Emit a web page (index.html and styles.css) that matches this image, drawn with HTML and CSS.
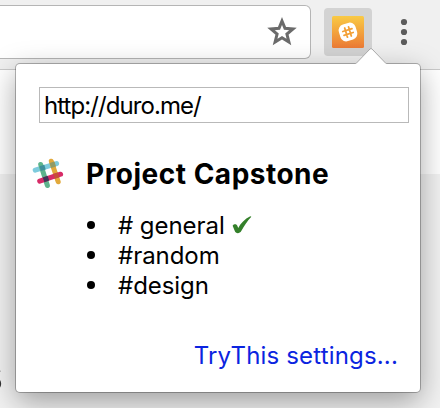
FILE: index.html
```
<!DOCTYPE html>
<html lang="en">
<head>
<meta charset="utf-8">
<title>TryThis</title>
<link rel="stylesheet" href="styles.css">
</head>
<body>
<header class="toolbar">
  <div class="address-bar">
    <svg class="star" width="32" height="32" viewBox="0 0 32 32"><path d="M16 5 19 12.3 27 12.9 20.9 18.1 22.9 26 16 21.7 9.1 26 11.1 18.1 5 12.9 13 12.3Z" fill="none" stroke="#6b6b6b" stroke-width="3"/></svg>
  </div>
  <div class="extension">
    <svg width="32" height="32" viewBox="0 0 32 32">
      <defs><linearGradient id="sun" x2="0" y2="1"><stop stop-color="#f9ca45"/><stop offset="1" stop-color="#ec7b35"/></linearGradient></defs>
      <rect width="32" height="32" rx="1.5" fill="url(#sun)"/>
      <g transform="rotate(-17 16 16)">
        <rect x="7.3" y="7.3" width="17.4" height="17.4" rx="6" fill="#fff"/>
        <path d="M14 11.2v9.6M18 11.2v9.6M11.2 14h9.6M11.2 18h9.6" stroke="#f3a037" stroke-width="1.8" stroke-linecap="round"/>
      </g>
    </svg>
  </div>
  <svg class="menu" width="8" height="28" viewBox="0 0 8 28" fill="#5c5c5c"><circle cx="4" cy="4" r="3.1"/><circle cx="4" cy="14" r="3.1"/><circle cx="4" cy="24" r="3.1"/></svg>
</header>
<div class="page-top"></div>
<main class="page"><span class="page-text">s</span></main>

<section class="popup">
  <svg class="arrow" width="32" height="17" viewBox="0 0 32 17"><path d="M0 17 V16 L1 15.5 15 1 Q16 0 17 1 L31 15.5 32 16 V17Z" fill="#fff"/><path d="M0 15.5H1L15 1Q16 0 17 1L31 15.5H32" fill="none" stroke="#aaa" stroke-width="1"/></svg>
  <input class="url" type="text" value="http://duro.me/">
  <div class="team">
    <svg class="logo" width="34" height="34" viewBox="0 0 34 34" stroke-width="5" stroke-linecap="round">
      <path d="M5.2 13.1 26.6 6.6" stroke="#7ecbdd"/>
      <path d="M21.3 4.2 28.2 24.8" stroke="#e2a93b"/>
      <path d="M10.7 7.5 17.4 28.5" stroke="#5db48c"/>
      <path d="M9.7 24.1 30.6 17.2" stroke="#d72b67"/>
      <g stroke-linecap="butt">
        <path d="M10.2 11.6 15 10.2" stroke="#3e8f9a"/>
        <path d="M20.4 8.5 25.2 7" stroke="#8f9b67"/>
        <path d="M13.6 22.8 18.4 21.2" stroke="#403657"/>
        <path d="M23.9 19.4 28.7 17.8" stroke="#c74b3b"/>
      </g>
    </svg>
    <h1 class="title">Project Capstone</h1>
  </div>
  <ul class="channels">
    <li class="channel"><span class="name"># general</span><svg class="check" width="20" height="18" viewBox="0 0 22 20"><path d="M.6 10.7C2.2 8.6 5.2 8.9 5.9 11L6.8 13.2C9.5 8.1 14 3.3 20.2 .2L21.4 .8C17 5.5 13 11.5 10.2 16.8 8.6 19.8 4 20 3 16.8Z" fill="#34802a"/></svg></li>
    <li class="channel"><span class="name">#random</span></li>
    <li class="channel"><span class="name">#design</span></li>
  </ul>
  <a class="settings">TryThis settings...</a>
</section>
</body>
</html>
```
FILE: styles.css
```
* { box-sizing: border-box; }
body {
  margin: 0;
  width: 440px;
  height: 408px;
  overflow: hidden;
  position: relative;
  display: flex;
  flex-direction: column;
  background: #fff;
  font-family: Inter, "Liberation Sans", sans-serif;
  font-size: 24px;
  color: #000;
}
.toolbar {
  flex: none;
  display: flex;
  align-items: flex-start;
  height: 70px;
  padding-top: 5px;
  background: #f0f0f0;
  border-bottom: 1px solid #c9c9c9;
}
.address-bar {
  display: flex;
  justify-content: flex-end;
  width: 311px;
  height: 54px;
  padding: 10px 12px;
  border: 1px solid #b5b5b5;
  border-left: 0;
  border-radius: 0 6px 6px 0;
  background: #fff;
}
.extension {
  display: flex;
  width: 48px;
  height: 48px;
  margin: 3px 0 0 13px;
  padding: 8px;
  border-radius: 4px;
  background: #d3d3d3;
}
.menu { margin: 13px 0 0 28px; }
.page-top { flex: none; height: 104px; background: #fff; }
.page { flex: 1; background: #f2f2f2; }
.page-text {
  display: block;
  margin: 173px 0 0 -23px;
  font-size: 49px;
  line-height: 56px;
  font-weight: 500;
  color: #333;
}
.popup {
  position: absolute;
  left: 16px;
  top: 64px;
  width: 404px;
  height: 328px;
  padding: 23px 11px 0 17px;
  display: flex;
  flex-direction: column;
  border-radius: 4px;
  background: #fff;
  box-shadow: 0 0 0 1px rgba(0, 0, 0, .27), 0 9px 30px rgba(0, 0, 0, .36);
}
.arrow { position: absolute; left: 339px; top: -16px; }
.url {
  width: 370px;
  height: 36px;
  margin: 0 0 0 6px;
  padding: 1px 4px 0;
  border: 1px solid #b9b9b9;
  outline: 0;
  background: #fff;
  color: #000;
  font: inherit;
  letter-spacing: -.93px;
}
.team {
  display: flex;
  align-items: center;
  height: 34px;
  margin-top: 34px;
}
.logo { flex: none; margin-left: -3px; }
.title {
  margin: 0 0 0 22px;
  font-size: 28px;
  line-height: 34px;
  font-weight: 700;
  letter-spacing: .5px;
  white-space: nowrap;
}
.channels { list-style: none; margin: 19px 0 0 54px; padding: 0; }
.channel {
  display: flex;
  align-items: center;
  height: 30px;
  letter-spacing: -.05px;
}
.channel::before {
  content: "";
  width: 8px;
  height: 8px;
  margin-right: 23px;
  border-radius: 50%;
  background: #000;
}
.check { margin-left: 7px; }
.settings {
  align-self: flex-end;
  margin: 41px 11px 0 0;
  line-height: 30px;
  color: #0b24e0;
  letter-spacing: .17px;
  white-space: nowrap;
}
```
